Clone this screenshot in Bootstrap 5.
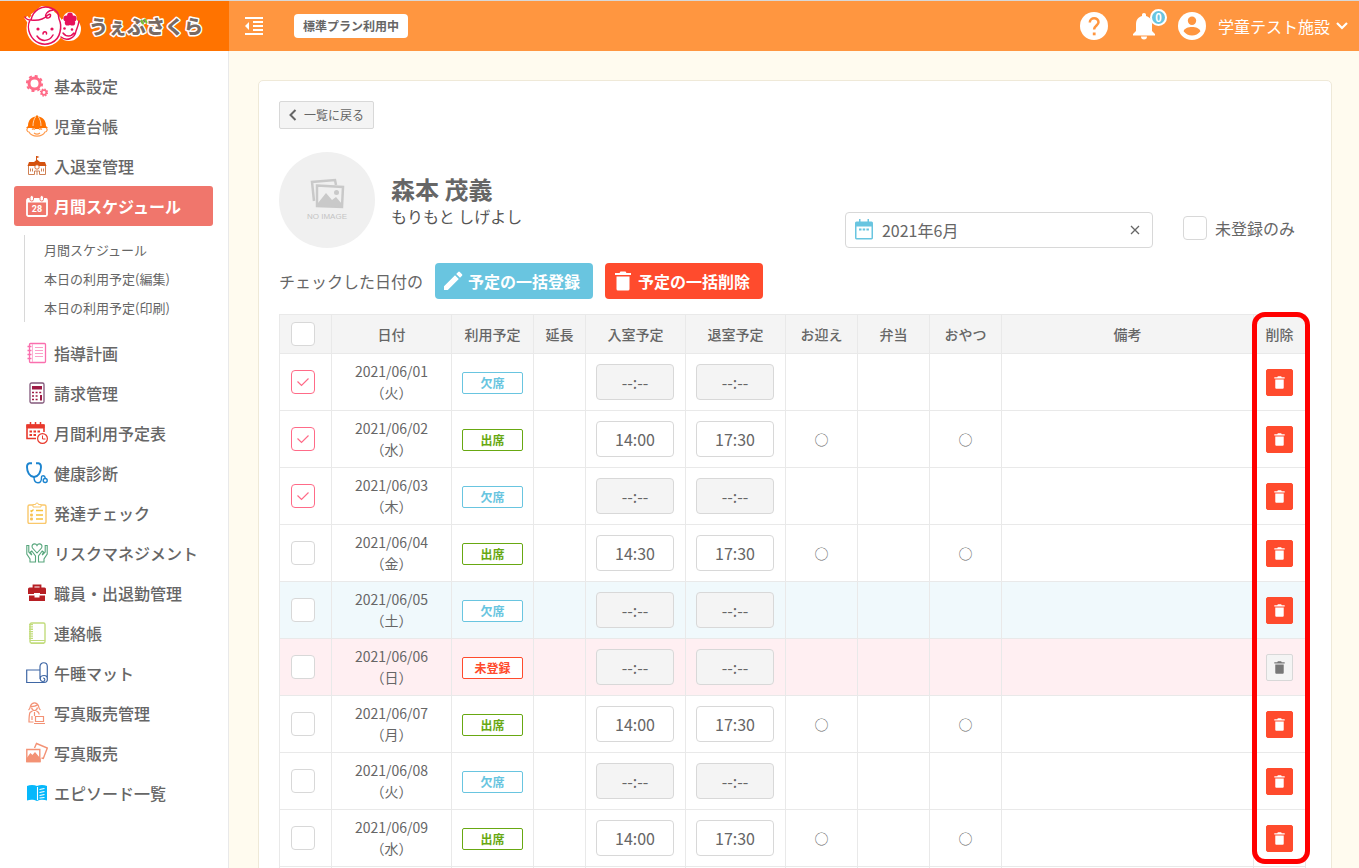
<!DOCTYPE html>
<html lang="ja">
<head>
<meta charset="utf-8">
<meta name="viewport" content="width=device-width, initial-scale=1">
<title>月間スケジュール</title>
<link href="https://cdn.jsdelivr.net/npm/bootstrap@5.3.0/dist/css/bootstrap.min.css" rel="stylesheet">
<style>
  body { font-family: "Noto Sans CJK JP", sans-serif; font-size: 16px; line-height: 24px; color: #666; background: #fffbef; }
  a { color: inherit; text-decoration: none; }
  svg { display: block; flex: none; }
  .app-shell { height: 100vh; overflow: hidden; }
  .topbar { height: 51px; border-top: 1px solid #d8d8d8; background: #ff9640; color: #fff; }
  .brand-area { width: 229px; background: #ff7300; padding-left: 20px; }
  .topbar-tools { padding: 0 9px 0 16px; }
  .plan-tag { background: #fff; color: #666; font-size: 12px; line-height: 24px; font-weight: 700; border-radius: 4px; padding: 0 9px; margin-left: 31px; }
  .bare-btn { background: none; border: 0; padding: 0; color: inherit; }
  .user-menu { margin-left: 22px; }
  .notice-count { position: absolute; top: -3px; right: -11px; min-width: 17px; height: 17px; border: 2px solid #fff; border-radius: 9px; background: #69c5e0; font-size: 11px; line-height: 13px; font-weight: 700; text-align: center; }
  .sidebar { width: 229px; background: #fff; border-right: 1px solid #e9e9e9; padding: 15px 15px 0 14px; }
  .menu-link { height: 40px; padding: 0 12px; gap: 6px; font-weight: 500; border-radius: 3px; white-space: nowrap; }
  .menu-link.active { background: #f0766c; color: #fff; font-weight: 700; }
  .submenu { margin: 9px 0 11px 10px; padding-left: 19px; border-left: 1px solid #d8d8d8; font-size: 13px; line-height: 29px; }
  .submenu a { display: block; }
  .page-area { padding: 29px 27px 0 29px; min-width: 0; overflow-y: auto; scrollbar-width: none; }
  .page-area::-webkit-scrollbar { display: none; }
  .panel { background: #fff; border: 1px solid #efe9d8; border-radius: 5px; padding: 20px; padding-right: 25px; }
  .back-btn { height: 28px; border: 1px solid #d8d8d8; border-radius: 2px; background: #f4f4f4; color: #666; font-size: 12px; padding: 0 9px 0 8px; gap: 6px; }
  .avatar-row { margin-top: 23px; height: 96px; }
  .name-block { padding-top: 22px; }
  .child-name { font-size: 24px; line-height: 30px; font-weight: 700; margin: 0; }
  .child-kana { line-height: 24px; color: #555; }
  .filters { gap: 30px; padding: 0 11px 0 0; }
  .month-box { width: 308px; height: 36px; border: 1px solid #d8d8d8; border-radius: 4px; padding: 0 10px 0 8px; }
  .month-box input { border: 0; outline: 0; color: #666; min-width: 0; padding: 0; }
  .tick { appearance: none; width: 24px; height: 24px; margin: 0; border: 1px solid #d8d8d8; border-radius: 4px; background: #fff center/12px no-repeat; display: block; }
  .tick:checked { border-color: #ff6b88; background-image: url("data:image/svg+xml,%3Csvg xmlns='http://www.w3.org/2000/svg' viewBox='0 0 12 12'%3E%3Cpath d='M0.5 5.5l4 4L11.500 2.500' fill='none' stroke='%23ff6b88' stroke-width='1.2'/%3E%3C/svg%3E"); }
  .bulk-row { margin: 15px 0; gap: 12px; }
  .bulk-btn { height: 36px; border: 0; border-radius: 4px; color: #fff; font-weight: 700; padding: 0 13px 0 8px; gap: 5px; }
  .bulk-add { background: #69c5e0; }
  .bulk-del { background: #ff4b2d; }
  .plan-table { width: 100%; table-layout: fixed; font-size: 14px; line-height: 21px; text-align: center; border-collapse: collapse; }
  .plan-table th, .plan-table td { border: 1px solid #e9e9e9; padding: 0; }
  .plan-table th { height: 39px; background: #f4f4f4; font-weight: 500; }
  .plan-table td { height: 57px; }
  .plan-table .tick { margin-left: 11px; }
  .plan-table .sat td { background: #f0f9fc; }
  .plan-table .sun td { background: #ffeff2; }
  .col-s { width: 52px; } .col-date { width: 120px; } .col-state { width: 82px; } .col-time { width: 100px; } .col-opt { width: 72px; }
  .state { display: block; width: 61px; margin: 2px auto 0; border: 1px solid; border-radius: 2px; background: #fff; font-size: 12px; line-height: 20px; font-weight: 700; }
  .absent { color: #69c5e0; } .present { color: #68a812; } .unset { color: #ff4b2d; }
  .time-in { width: 78px; height: 36px; border: 1px solid #d8d8d8; border-radius: 4px; background: #fff; color: #666; font-size: 16px; text-align: center; padding: 0; display: block; margin-left: 10px; }
  .time-in:disabled { background: #f4f4f4; }
  .del-btn { width: 27px; height: 27px; border: 1px solid #ff4b2d; border-radius: 2px; background: #ff4b2d; color: #fff; padding: 0; display: flex; align-items: center; justify-content: center; margin: 1px auto 0; }
  .del-btn:disabled { background: #f4f4f4; border-color: #d8d8d8; color: #777; }
  .callout-ring { position: absolute; top: -2px; right: -4px; width: 58px; height: 552px; border: 5px solid #f00; border-radius: 13px; pointer-events: none; }
</style>
</head>
<body>
<svg width="0" height="0" class="position-absolute" aria-hidden="true">
  <symbol id="trash" viewBox="0 0 16 20"><path d="M0 2h4.500l1-1.500h5l1 1.500H16v2H0zM1.500 5.500h13V18a1.500 1.500 0 0 1-1.500 1.500H3A1.500 1.500 0 0 1 1.500 18z" fill="currentColor"/></symbol>
</svg>
<div class="app-shell d-flex flex-column">
  <header class="topbar d-flex flex-shrink-0">
    <a href="#" class="brand-area d-flex align-items-center" aria-label="うぇぶさくら">
      <svg width="190" height="48" viewBox="0 0 190 48">
        <g fill="#fff" stroke="#fff" stroke-width="4" stroke-linejoin="round"><circle cx="25" cy="26" r="16.500"/><circle cx="49" cy="27" r="10"/><circle cx="50" cy="17" r="5"/><path d="M6 15l4 6M12 14l10-8 12 4"/></g>
        <g fill="none" stroke="#e6105a" stroke-width="1.500" stroke-linecap="round" stroke-linejoin="round">
          <path d="M5 15c1 2 3 3 6 3C13 8 22 3 31 6c6 2 8 7 8 11M11 18c7 1 13-1 17-5 4-3 3 4-1 3-4-2 1-9 8-8M10 18c-2 4-2 10 0 14 4 9 13 12 21 9 5-2 8-6 9-11 1-4 1-9-1-13"/>
          <path d="M23 32c0-3 4-3 3.500 0M17 34c4 6 12 6 16-1"/>
          <path d="M41 35c6 5 14 1 15-6 1-3 2-4 3-10M43 31c3 4 8 4 11 0"/>
        </g>
        <g fill="#e6105a"><circle cx="18" cy="27" r="1.600"/><circle cx="32" cy="27" r="1.600"/><circle cx="44.500" cy="26.500" r="1.300"/><circle cx="52" cy="27.500" r="1.300"/><circle cx="50" cy="13.500" r="2.900"/><circle cx="46.300" cy="16.500" r="2.900"/><circle cx="53.700" cy="16.500" r="2.900"/><circle cx="47.700" cy="20.700" r="2.900"/><circle cx="52.300" cy="20.700" r="2.900"/><circle cx="50" cy="17.500" r="2.500"/></g>
        <text x="69" y="32" font-size="19" font-weight="900" fill="#786a63" stroke="#fff" stroke-width="3" stroke-linejoin="round" paint-order="stroke">うぇぶさくら</text>
        <path d="M121.500 18.500l1.500 3M125 17.500l1.500 3" stroke="#77c232" stroke-width="2" stroke-linecap="round"/>
      </svg>
    </a>
    <div class="topbar-tools d-flex align-items-center flex-grow-1">
      <button class="bare-btn" type="button" aria-label="メニューを閉じる"><svg width="18" height="18" viewBox="0 0 18 18"><path d="M0 1h18M8 5h10M8 9h10M8 13h10M0 17h18" stroke="#fff" stroke-width="2"/><path d="M4 5v8L0 9z" fill="#fff"/></svg></button>
      <span class="plan-tag">標準プラン利用中</span>
      <a href="#" class="ms-auto" aria-label="ヘルプ"><svg width="28" height="28" viewBox="0 0 28 28"><circle cx="14" cy="14" r="14" fill="#fff"/><path d="M9.800 10.500c0-5.600 8.700-5.600 8.700-.2 0 3-4.400 3.500-4.400 7.200" fill="none" stroke="#ff9640" stroke-width="2.500"/><path d="M12.800 20.500h2.800v2.800h-2.800z" fill="#ff9640"/></svg></a>
      <a href="#" class="position-relative ms-4" aria-label="お知らせ"><svg width="24" height="28" viewBox="0 0 24 28"><path d="M12 1c1.300 0 2 .9 2 2v1c4 1 6 4.300 6 8v7l3 3v1.500H1V22l3-3v-7c0-3.700 2-7 6-8V3c0-1.100.7-2 2-2zM9 24.500h6a3 3 0 0 1-6 0z" fill="#fff"/></svg><span class="notice-count">0</span></a>
      <button type="button" class="bare-btn user-menu d-flex align-items-center"><svg width="28" height="28" viewBox="0 0 28 28" class="me-2"><circle cx="14" cy="14" r="14" fill="#fff"/><circle cx="14" cy="8.800" r="4.200" fill="#ff9640"/><path d="M5.600 19.300c1.500-5.600 15.300-5.600 16.800 0-3.800 5.700-13 5.700-16.800 0z" fill="#ff9640"/></svg><span class="ms-1">学童テスト施設</span><svg class="ms-1" width="16" height="10" viewBox="0 0 16 10"><path d="M3 2l5 5 5-5" fill="none" stroke="#fff" stroke-width="2.200"/></svg></button>
    </div>
  </header>
  <div class="d-flex flex-grow-1 overflow-hidden">
    <nav class="sidebar flex-shrink-0" aria-label="メインメニュー">
      <a href="#" class="menu-link d-flex align-items-center"><svg width="22" height="22" viewBox="0 0 22 22" fill="none" stroke="#ff6b88"><circle cx="8.500" cy="8.500" r="5.500" stroke-width="3"/><circle cx="8.500" cy="8.500" r="7.600" stroke-width="2" stroke-dasharray="3 2.970"/><circle cx="18" cy="17.500" r="2.300" stroke-width="1.700"/><circle cx="18" cy="17.500" r="3.500" stroke-width="1.300" stroke-dasharray="1.500 1.250"/></svg>基本設定</a>
      <a href="#" class="menu-link d-flex align-items-center"><svg width="22" height="22" viewBox="0 0 22 22"><path d="M2 11C2 5 6 1.500 10 1.500V.5h2v1c4 0 8 3.500 8 9.500l2 2H0z" fill="#ff7300"/><path d="M7 11c0-4 1-7 2.500-9M15 11c0-4-1-7-2.500-9" stroke="#ffd5b0" fill="none"/><path d="M2 13c-2 1-1 4 1 4 3 5.500 13 5.500 16 0 2 0 3-3 1-4M6 14.500c1-1 2-1 3 0M13 14.500c1-1 2-1 3 0M8 18c2 1.500 4 1.500 6 0" fill="none" stroke="#ff9a4c" stroke-width="1.200"/><path d="M8 11c1-2 5-2 6 0l-1 3H9z" fill="#ff7300"/></svg>児童台帳</a>
      <a href="#" class="menu-link d-flex align-items-center"><svg width="22" height="22" viewBox="0 0 22 22"><path d="M10.500 1v5" stroke="#d4520f"/><path d="M11 1l2.500 1L11 3zM8 7l3-2.500L14 7h5l1.500 4H1.500L3 7z" fill="#d4520f"/><path d="M2.500 11v8.500h6V16h5v3.500h6V11M4.500 13.500v3M6.500 13.500v3M15.500 13.500v3M17.500 13.500v3M11 16v4" fill="none" stroke="#cf8154"/><circle cx="11" cy="12" r="2.200" fill="#fff" stroke="#d4520f" stroke-width=".8"/></svg>入退室管理</a>
      <a href="#" class="menu-link active d-flex align-items-center" aria-current="page"><svg width="22" height="22" viewBox="0 0 22 22"><rect x="1" y="4" width="20" height="17" rx="1.500" fill="none" stroke="#fff" stroke-width="1.800"/><path d="M1 3.500h20v4H1z" fill="#fff"/><rect x="4" y=".5" width="3.500" height="5.500" rx="1.700" fill="#fff" stroke="#f0766c"/><rect x="14" y=".5" width="3.500" height="5.500" rx="1.700" fill="#fff" stroke="#f0766c"/><text x="11" y="17" text-anchor="middle" font-family="Roboto, sans-serif" font-size="9" font-weight="700" fill="#fff">28</text></svg>月間スケジュール</a>
      <div class="submenu">
        <a href="#">月間スケジュール</a>
        <a href="#">本日の利用予定(編集)</a>
        <a href="#">本日の利用予定(印刷)</a>
      </div>
      <a href="#" class="menu-link d-flex align-items-center"><svg width="22" height="22" viewBox="0 0 22 22" fill="none" stroke="#fa6fae"><rect x="3.500" y="1.500" width="16" height="19" rx="1" stroke-width="1.300"/><path d="M6.500 2v18" stroke="#fcb1d4"/><path d="M1.500 4.500h4M1.500 8.500h4M1.500 12.500h4M1.500 16.500h4" stroke-width="1.500"/><path d="M9 5.500h8M9 8.500h8M9 11.500h8M9 14.500h8" stroke="#fba0c9"/></svg>指導計画</a>
      <a href="#" class="menu-link d-flex align-items-center"><svg width="22" height="22" viewBox="0 0 22 22"><rect x="4" y="1" width="14" height="20" rx="1.500" fill="none" stroke="#83587b" stroke-width="1.300"/><path d="M6 4h10v3.500H6z" fill="#9e1b45"/><path d="M6 10.500h10M6 14h6.500M6 17.500h6.500" stroke="#9e1b45" stroke-width="1.700" stroke-dasharray="2 1.600"/><path d="M15 13v5.500" stroke="#9e1b45" stroke-width="2"/></svg>請求管理</a>
      <a href="#" class="menu-link d-flex align-items-center"><svg width="22" height="22" viewBox="0 0 22 22" fill="none" stroke="#e8392c"><path d="M10 16.500H1V3h17v7" stroke-width="1.600"/><path d="M1 3h17v3H1z" fill="#e8392c"/><path d="M4.500 0v4M9.500 0v4M14.500 0v4" stroke-width="1.500"/><path d="M3.500 9.500h12M3.500 13h8" stroke-width="2.200" stroke-dasharray="2.500 1.500"/><circle cx="16.500" cy="16.500" r="4.900" fill="#fff" stroke-width="1.200"/><path d="M16.500 13.500v3.500h3"/></svg>月間利用予定表</a>
      <a href="#" class="menu-link d-flex align-items-center"><svg width="22" height="22" viewBox="0 0 22 22" fill="none" stroke="#1c84cf" stroke-width="1.400"><path d="M6 1.200H3.500C1 1.500 1 3 1 5c0 5 2.500 9.500 7 10 4.500-.5 7-5 7-10 0-2 0-3.500-2.500-3.800H10" stroke-width="1.900"/><path d="M8 15c0 3 1 5.800 4 5.800s3.500-2.300 3.500-5.300c0-2.500 3.500-2.500 3.700.5"/><circle cx="19.200" cy="18.500" r="2"/></svg>健康診断</a>
      <a href="#" class="menu-link d-flex align-items-center"><svg width="22" height="22" viewBox="0 0 22 22" fill="none" stroke="#fac86b"><rect x="2" y="3" width="18" height="18.500" rx="1.500" stroke-width="1.400"/><path d="M7 5V2.500h2.500a1.500 1.500 0 0 1 3 0H15V5z" fill="#fff"/><path d="M4.500 8.500l1 1 2-2M10 8.500h7M10 13h7M10 17h7" stroke="#f6c23e" stroke-width="1.300"/><path d="M4.500 12h2v2h-2zM4.500 16h2v2h-2z" fill="#f6c23e"/></svg>発達チェック</a>
      <a href="#" class="menu-link d-flex align-items-center"><svg width="22" height="22" viewBox="0 0 22 22" fill="none" stroke="#57a67c" stroke-width="1.100"><path d="M11 11L6.500 6c-2-4 3-5.500 4.500-2.500C12.500.5 17.500 2 15.500 6z"/><path d="M4 20v-3L.8 12V3.500h2V10l3 3L4.500 10l1.300-1L9.500 14v6zM18 20v-3l3.200-5V3.500h-2V10l-3 3 1.300-3-1.300-1-3.700 5v6z"/></svg>リスクマネジメント</a>
      <a href="#" class="menu-link d-flex align-items-center"><svg width="22" height="22" viewBox="0 0 22 22"><path d="M7.500 6V3.500h7V6" fill="none" stroke="#b71f24" stroke-width="1.800"/><path d="M3.500 5.500h15A1.500 1.500 0 0 1 20 7v5h-6v-1H8v1H2V7a1.500 1.500 0 0 1 1.500-1.500zM3 13.500h5.500v2h5v-2H19V19H3z" fill="#b71f24"/></svg>職員・出退勤管理</a>
      <a href="#" class="menu-link d-flex align-items-center"><svg width="22" height="22" viewBox="0 0 22 22" fill="none" stroke="#c2dc7d"><rect x="4" y="1" width="15" height="20" rx="1.500" stroke-width="1.400"/><path d="M4 18.500h15M5 21.500h13"/><path d="M5 2v16" stroke-width="4" stroke-dasharray="1.300 1"/></svg>連絡帳</a>
      <a href="#" class="menu-link d-flex align-items-center"><svg width="22" height="22" viewBox="0 0 22 22" fill="none" stroke="#3f67a5" stroke-width="1.200"><path d="M14 8H.7v12.500H18c4.500 0 4.500-7 0-7-5 0-4.500 6-1 6 2.500 0 2.500-3.500 0-3.500M14 17V4.500c0-5 7.300-5 7.300 0V17"/></svg>午睡マット</a>
      <a href="#" class="menu-link d-flex align-items-center"><svg width="22" height="22" viewBox="0 0 22 22" fill="none" stroke="#f39275" stroke-width="1.200"><path d="M2.500 8c1.500-1 1.500-2 2-4C6-.3 11-.3 12.500 4c.5 2 .5 3 2 4M5 4.500c3 0 5-.5 6-1.500M5.500 5.500c1 4 5 4 6 0M6.500 9L4 10.500C3 13 3 16 3 20h4.500M10.500 9l2 1.500.8 2M6 14v4M8.500 10v4M9.500 14.500h8v5h-8zM8 21.500h11"/></svg>写真販売管理</a>
      <a href="#" class="menu-link d-flex align-items-center"><svg width="22" height="22" viewBox="0 0 22 22" fill="none" stroke="#f39275" stroke-width="1.400"><path d="M8.500 6l2-4.500L21.300 6l-4 10.500-1.800-.5"/><path d="M.8 7.500h13v12H.8z"/><path d="M1 17l3.500-5 2 2L9 11l5 6v2.500H1z" fill="#f39275"/></svg>写真販売</a>
      <a href="#" class="menu-link d-flex align-items-center"><svg width="22" height="22" viewBox="0 0 22 22"><path d="M1 4c3-1.500 7-1.500 10 0 3-1.500 7-1.500 10 0v14.500c-3-1-7-1-10 .5-3-1.500-7-1.500-10-.5z" fill="#06b8fb"/><path d="M11.500 5v13M13.500 7.500l5-1M13.500 10.500l5-1M13.500 13.500l5-1M13.500 16l5-.5" stroke="#fff" stroke-width="1.100"/></svg>エピソード一覧</a>
    </nav>
    <main class="page-area flex-grow-1">
      <section class="panel">
        <button type="button" class="back-btn d-flex align-items-center"><svg width="10" height="12" viewBox="0 0 10 12"><path d="M7.500 1L2.500 6l5 5" fill="none" stroke="#666" stroke-width="2"/></svg><span>一覧に戻る</span></button>
        <div class="avatar-row d-flex">
          <svg width="96" height="96" viewBox="0 0 96 96" role="img" aria-label="NO IMAGE"><circle cx="48" cy="48" r="48" fill="#f0f0f0"/><path d="M35 49l-2-19 23-2 1 5" fill="none" stroke="#c9c9c9" stroke-width="2.500"/><path d="M38 33.500l26 1.500-1 20-25-1z" fill="#f0f0f0" stroke="#c9c9c9" stroke-width="2.500"/><path d="M39 51l8-10 6 7 4-3 6 7v3l-24-1z" fill="#c9c9c9"/><circle cx="57.500" cy="40.500" r="2.500" fill="#c9c9c9"/><text x="48" y="67" text-anchor="middle" font-family="Liberation Sans, sans-serif" font-size="8" fill="#c4c4c4">NO IMAGE</text></svg>
          <div class="name-block ms-3"><h1 class="child-name">森本 茂義</h1><div class="child-kana">もりもと しげよし</div></div>
          <div class="filters d-flex align-items-end ms-auto">
            <div class="month-box d-flex align-items-center"><svg width="20" height="22" viewBox="0 0 20 22"><path d="M3 2.500h2V0h1.500v2.500h7V0H15v2.500h2A1.800 1.800 0 0 1 19 4.500v14a1.800 1.800 0 0 1-2 2H3a1.800 1.800 0 0 1-2-2v-14a1.800 1.800 0 0 1 2-2zM2.500 7.500v11.500h15V7.500z" fill="#69c5e0" fill-rule="evenodd"/><path d="M5 10.500h10" stroke="#69c5e0" stroke-width="2" stroke-dasharray="2.500 1.200"/></svg><input type="text" class="flex-grow-1 ms-2" value="2021年6月" aria-label="対象月"><button type="button" class="bare-btn" aria-label="クリア"><svg width="14" height="14" viewBox="0 0 14 14"><path d="M3 3l8 8M11 3l-8 8" stroke="#666" stroke-width="1.300"/></svg></button></div>
            <div class="d-flex align-items-center gap-2 pb-2"><input class="tick" type="checkbox" id="only-unset"><label for="only-unset">未登録のみ</label></div>
          </div>
        </div>
        <div class="bulk-row d-flex align-items-center">
          <span>チェックした日付の</span>
          <button type="button" class="bulk-btn bulk-add d-flex align-items-center"><svg width="20" height="20" viewBox="0 0 20 20"><path d="M1 15.200L12 4.200l3.800 3.800-11 11H1zM13.200 3l2-2q.8-.8 1.600 0l2.200 2.200q.8.800 0 1.600l-2 2z" fill="#fff"/></svg>予定の一括登録</button>
          <button type="button" class="bulk-btn bulk-del d-flex align-items-center"><svg width="20" height="20"><use href="#trash"/></svg>予定の一括削除</button>
        </div>
        <div class="position-relative">
          <table class="plan-table">
            <colgroup><col class="col-s"><col class="col-date"><col class="col-state"><col class="col-s"><col class="col-time"><col class="col-time"><col class="col-opt"><col class="col-opt"><col class="col-opt"><col><col class="col-s"></colgroup>
            <thead><tr><th><input class="tick" type="checkbox" aria-label="すべて選択"></th><th>日付</th><th>利用予定</th><th>延長</th><th>入室予定</th><th>退室予定</th><th>お迎え</th><th>弁当</th><th>おやつ</th><th>備考</th><th>削除</th></tr></thead>
            <tbody id="days"></tbody>
          </table>
          <div class="callout-ring"></div>
        </div>
      </section>
    </main>
  </div>
</div>
<script src="https://cdn.jsdelivr.net/npm/bootstrap@5.3.0/dist/js/bootstrap.bundle.min.js"></script>
<script>
  // One entry per day: weekday, state, arrival, departure, ticked
  const labels = { absent: '欠席', present: '出席', unset: '未登録' };
  const days = [
    ['火', 'absent', '', '', true],
    ['水', 'present', '14:00', '17:30', true],
    ['木', 'absent', '', '', true],
    ['金', 'present', '14:30', '17:30'],
    ['土', 'absent', '', ''],
    ['日', 'unset', '', ''],
    ['月', 'present', '14:00', '17:30'],
    ['火', 'absent', '', ''],
    ['水', 'present', '14:00', '17:30'],
    ['木', 'absent', '', '']
  ];
  const timeField = (value, name) => `<input class="time-in" type="text" aria-label="${name}" value="${value || '--:--'}"${value ? '' : ' disabled'}>`;
  document.getElementById('days').innerHTML = days.map(([wd, state, from, to, on], i) => {
    const date = '2021/06/' + String(i + 1).padStart(2, '0');
    const mark = state === 'present' ? '○' : '';
    return `<tr class="${wd === '土' ? 'sat' : wd === '日' ? 'sun' : ''}">
      <td><input class="tick" type="checkbox" aria-label="${date}"${on ? ' checked' : ''}></td>
      <td>${date}<br>（${wd}）</td><td><span class="state ${state}">${labels[state]}</span></td><td></td>
      <td>${timeField(from, date + ' 入室予定')}</td><td>${timeField(to, date + ' 退室予定')}</td>
      <td>${mark}</td><td></td><td>${mark}</td><td></td>
      <td><button class="del-btn" type="button" aria-label="${date} を削除"${state === 'unset' ? ' disabled' : ''}><svg width="11" height="13"><use href="#trash"/></svg></button></td></tr>`;
  }).join('');
</script>
</body>
</html>
